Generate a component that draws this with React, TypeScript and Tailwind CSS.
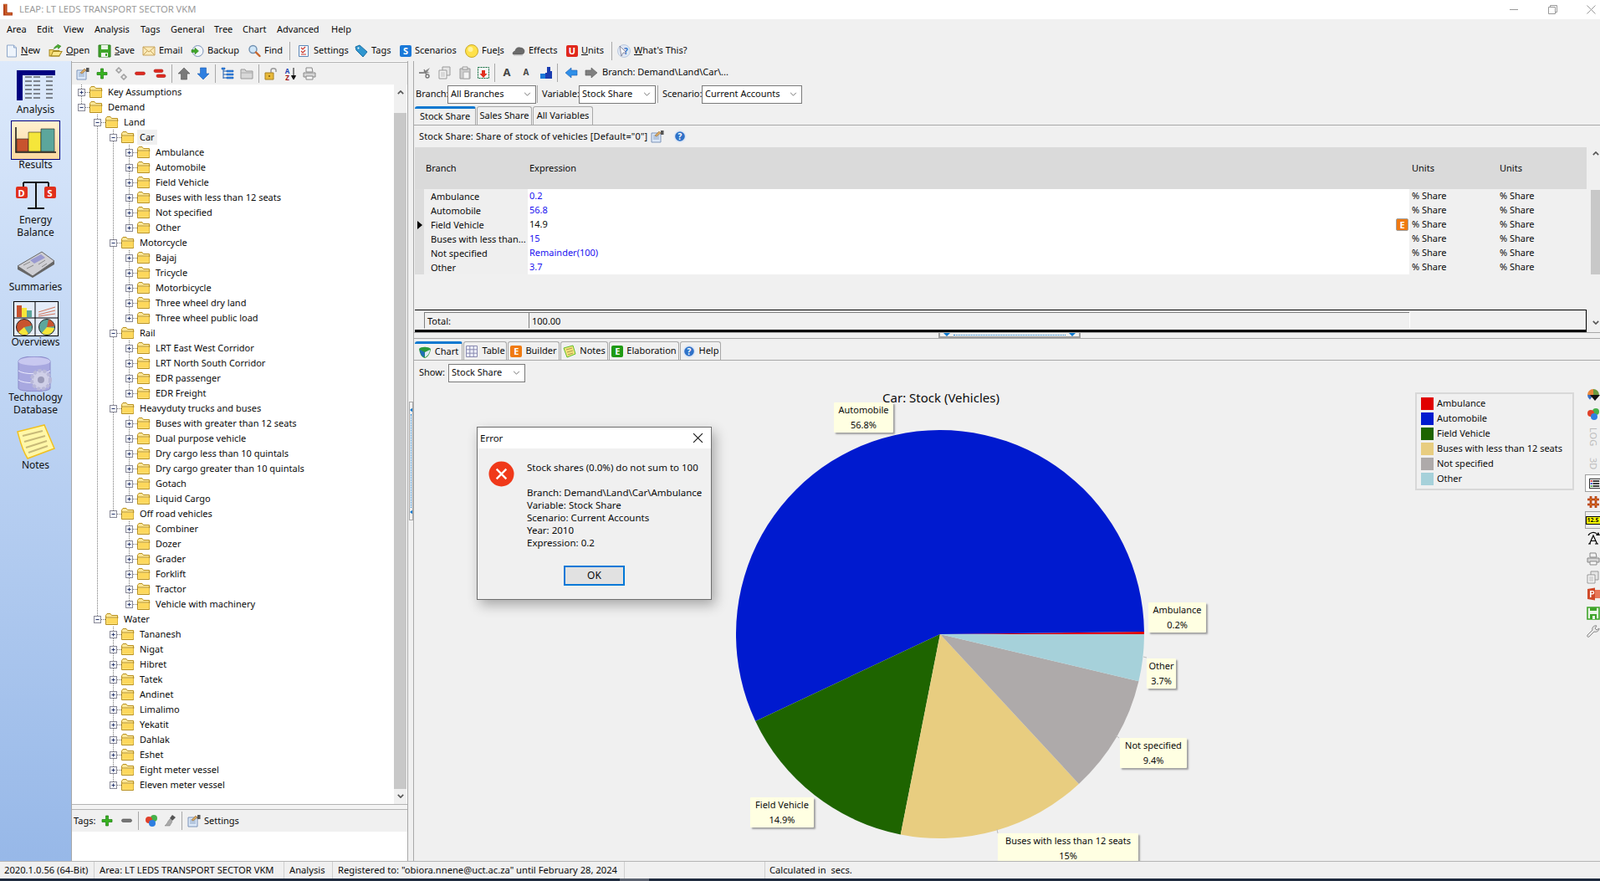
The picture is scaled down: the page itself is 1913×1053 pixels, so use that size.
import type { ReactNode } from "react";

type TreeNode = { name: string; children?: TreeNode[] };
type FlatRow = { name: string; guides: boolean[]; last: boolean; open: boolean };

const leaves = (...names: string[]): TreeNode[] => names.map((name) => ({ name }));

const tree: TreeNode[] = [
  { name: "Key Assumptions" },
  {
    name: "Demand",
    children: [
      {
        name: "Land",
        children: [
          { name: "Car", children: leaves("Ambulance", "Automobile", "Field Vehicle", "Buses with less than 12 seats", "Not specified", "Other") },
          { name: "Motorcycle", children: leaves("Bajaj", "Tricycle", "Motorbicycle", "Three wheel dry land", "Three wheel public load") },
          { name: "Rail", children: leaves("LRT East West Corridor", "LRT North South Corridor", "EDR passenger", "EDR Freight") },
          {
            name: "Heavyduty trucks and buses",
            children: leaves("Buses with greater than 12 seats", "Dual purpose vehicle", "Dry cargo less than 10 quintals", "Dry cargo greater than 10 quintals", "Gotach", "Liquid Cargo"),
          },
          { name: "Off road vehicles", children: leaves("Combiner", "Dozer", "Grader", "Forklift", "Tractor", "Vehicle with machinery") },
        ],
      },
      {
        name: "Water",
        children: leaves("Tananesh", "Nigat", "Hibret", "Tatek", "Andinet", "Limalimo", "Yekatit", "Dahlak", "Eshet", "Eight meter vessel", "Eleven meter vessel"),
      },
    ],
  },
];

function flatten(nodes: TreeNode[], guides: boolean[] = []): FlatRow[] {
  return nodes.flatMap((node, i) => {
    const last = i === nodes.length - 1;
    const row: FlatRow = { name: node.name, guides, last, open: !!node.children };
    return [row, ...(node.children ? flatten(node.children, [...guides, !last]) : [])];
  });
}

const rows = flatten(tree);

const gridRows = [
  { branch: "Ambulance", expr: "0.2", blue: true },
  { branch: "Automobile", expr: "56.8", blue: true },
  { branch: "Field Vehicle", expr: "14.9", blue: false },
  { branch: "Buses with less than...", expr: "15", blue: true },
  { branch: "Not specified", expr: "Remainder(100)", blue: true },
  { branch: "Other", expr: "3.7", blue: true },
];

const slices = [
  { name: "Ambulance", pct: 0.2, color: "#e00000" },
  { name: "Automobile", pct: 56.8, color: "#001acf" },
  { name: "Field Vehicle", pct: 14.9, color: "#1e6400" },
  { name: "Buses with less than 12 seats", pct: 15, color: "#e8cd80" },
  { name: "Not specified", pct: 9.4, color: "#aeaaaa" },
  { name: "Other", pct: 3.7, color: "#a6d1da" },
];

function Svg({ children, className = "w-4 h-4" }: { children: ReactNode; className?: string }) {
  return (
    <svg viewBox="0 0 16 16" className={`shrink-0 ${className}`}>
      {children}
    </svg>
  );
}

function Badge({ letter, className }: { letter: string; className: string }) {
  return (
    <span className={`shrink-0 flex items-center justify-center rounded-[2px] font-bold text-white text-[11px] leading-none ${className}`}>
      {letter}
    </span>
  );
}

const IconNew = () => (
  <svg viewBox="0 0 14 16" className="w-[14px] h-4 shrink-0">
    <path d="M1.500 1h8l3 3v11h-11z" fill="#eef4fc" stroke="#8ea6c8" />
    <path d="M9.500 1v3h3" fill="#cfdcf0" stroke="#8ea6c8" />
  </svg>
);
const IconOpen = () => (
  <Svg className="w-[17px] h-[17px]">
    <path d="M1 7h4l1 1h6v6H1z" fill="#f4d667" stroke="#a88a20" />
    <path d="M3 14l2-5h10l-3 5z" fill="#fbe88e" stroke="#a88a20" />
    <path d="M6 6c1-3 3-4 5-4l-1-1 4 2-3 3V4C9 4 8 5 6 6z" fill="#49b32e" stroke="#2b7a16" strokeWidth=".6" />
  </Svg>
);
const IconSave = () => (
  <Svg>
    <path d="M1 1h14v14H1z" fill="#3fa52a" stroke="#2a7d1a" />
    <path d="M4 1h8v5H4z" fill="#eaf5e6" />
    <path d="M4 10h8v5H4z" fill="#f4f4f4" />
    <path d="M9 11h2v3H9z" fill="#3fa52a" />
  </Svg>
);
const IconEmail = () => (
  <Svg>
    <path d="M1 3h14v10H1z" fill="#fbeab8" stroke="#c9a45a" />
    <path d="M1 3l7 6 7-6M1 13l5-5M15 13l-5-5" fill="none" stroke="#c9a45a" />
  </Svg>
);
const IconBackup = () => (
  <Svg>
    <circle cx="8.500" cy="8" r="6.500" fill="#f2f6fb" stroke="#7c93b8" />
    <path d="M1 6.500h4V4l4.500 4L5 12V9.500H1z" fill="#3fa52a" stroke="#2a7d1a" strokeWidth=".5" />
  </Svg>
);
const IconFind = () => (
  <Svg>
    <circle cx="6.500" cy="6" r="4.500" fill="#cfe6f8" stroke="#6f8fb0" strokeWidth="1.400" />
    <path d="M10 9.500l4.500 4.500" stroke="#c8642a" strokeWidth="2.400" strokeLinecap="round" />
  </Svg>
);
const IconSettings = () => (
  <Svg>
    <path d="M2.500 1.500h11v13h-11z" fill="#f2f7fd" stroke="#5e88b8" />
    <path d="M5 4l2 2 3-3M5 8l2 2 3-3" fill="none" stroke="#d23a2a" strokeWidth="1.200" />
    <path d="M5 12h6" stroke="#d23a2a" />
  </Svg>
);
const IconTag = () => (
  <Svg>
    <path d="M1 3l5-2 9 8-5 6-8-8z" fill="#2f96cf" stroke="#1d6fa3" />
    <circle cx="4.500" cy="4.500" r="1" fill="#fff" />
  </Svg>
);
const IconFuel = () => (
  <Svg>
    <circle cx="8" cy="8" r="7.500" fill="#ffe14a" stroke="#c9a92a" />
    <circle cx="6.500" cy="6" r="3" fill="#fff39e" />
  </Svg>
);
const IconCloud = () => (
  <Svg>
    <path d="M1 11c0-2 2-3 3-3 0-3 3-5 6-4 3 0 5 2 5 4 0 3-2 4-4 4H3c-1 0-2 0-2-1z" fill="#6b6b6b" stroke="#444" strokeWidth=".5" />
    <path d="M2 13h11" stroke="#bbb" />
  </Svg>
);
const IconHelp = () => (
  <Svg>
    <circle cx="8" cy="8" r="7.500" fill="#dfe7f4" />
    <circle cx="8" cy="8" r="5.800" fill="#2f72c8" />
    <text x="8" y="11.500" textAnchor="middle" fontSize="10" fontWeight="700" fill="#fff" fontFamily="Open Sans">?</text>
  </Svg>
);
const IconWhat = () => (
  <Svg>
    <circle cx="8" cy="8" r="7.500" fill="#dfe7f4" stroke="#9fb2d0" strokeWidth=".6" />
    <path d="M3 2l8 8H7l-2 4z" fill="#fff" stroke="#444a6a" strokeWidth=".6" />
    <text x="10.500" y="12" textAnchor="middle" fontSize="10" fontWeight="700" fill="#2f72c8" fontFamily="Open Sans">?</text>
  </Svg>
);
const IconPlus = ({ c = "#37b320", d = "#1d7a10" }: { c?: string; d?: string }) => (
  <Svg>
    <path d="M6.500 2h3v4.500H14v3H9.500v4.500h-3V9.500H2v-3h4.500z" fill={c} stroke={d} strokeWidth=".7" />
  </Svg>
);
const IconMove = () => (
  <Svg>
    <path d="M4 1h2v2h2v2H6v2H4V5H2V3h2zM10 9h2v2h2v2h-2v2h-2v-2H8v-2h2z" fill="#eee" stroke="#777" strokeWidth=".8" />
  </Svg>
);
const IconMinus = ({ c = "#e02a20", d = "#a8140e" }: { c?: string; d?: string }) => (
  <Svg>
    <rect x="1.500" y="6" width="12" height="3.500" rx="1.700" fill={c} stroke={d} strokeWidth=".6" />
  </Svg>
);
const IconMinus2 = () => (
  <Svg>
    <rect x="1" y="3" width="11" height="3.500" rx="1.700" fill="#e02a20" stroke="#a8140e" strokeWidth=".6" />
    <rect x="4" y="9" width="11" height="3.500" rx="1.700" fill="#e02a20" stroke="#a8140e" strokeWidth=".6" />
  </Svg>
);
const IconUp = () => (
  <Svg>
    <path d="M8 1l7 7h-3.500v7h-7V8H1z" fill="#7a7a7a" stroke="#555" strokeWidth=".6" />
  </Svg>
);
const IconDown = () => (
  <Svg>
    <path d="M4.500 1h7v7H15l-7 7-7-7h3.500z" fill="#2f7fe0" stroke="#1b5cb0" strokeWidth=".6" />
  </Svg>
);
const IconTreeView = () => (
  <Svg>
    <path d="M3 1v13M3 5h4M3 9h4M3 13h4" stroke="#1b5cb0" fill="none" />
    <path d="M1 1h4v2H1zM7 4h8v2H7zM7 8h8v2H7zM7 12h8v2H7z" fill="#2f7fe0" stroke="#1b5cb0" strokeWidth=".5" />
  </Svg>
);
const IconGrayFolder = () => (
  <Svg>
    <path d="M1 5V3h5l1 2h8v9H1z" fill="#d8d8d8" stroke="#999" />
    <path d="M1 7h14" stroke="#aaa" />
  </Svg>
);
const IconLock = () => (
  <Svg>
    <path d="M8 7V4c0-3 6-3 6 0v2" fill="none" stroke="#999" strokeWidth="1.500" />
    <path d="M1 7h10v8H1z" fill="#e8b93a" stroke="#a88020" />
    <circle cx="6" cy="11" r="1" fill="#7a5a10" />
  </Svg>
);
const IconAZ = () => (
  <Svg>
    <text x="4.500" y="7.500" textAnchor="middle" fontSize="8" fontWeight="700" fill="#1b3cb0" fontFamily="Open Sans">A</text>
    <text x="4.500" y="15.500" textAnchor="middle" fontSize="8" fontWeight="700" fill="#a01010" fontFamily="Open Sans">Z</text>
    <path d="M12 1v11M9.500 10.500L12 15l2.500-4.500z" stroke="#111" fill="#111" />
  </Svg>
);
const IconPrint = () => (
  <Svg>
    <path d="M4 1h7l1 5H4z" fill="#f2f2f2" stroke="#888" />
    <path d="M1 7h14v5H1z" fill="#d5d5d5" stroke="#888" />
    <path d="M4 11h8v4H4z" fill="#f8f8f8" stroke="#888" />
  </Svg>
);
const IconEdit = () => (
  <Svg>
    <path d="M1 4h11v11H1z" fill="#dbe8f8" stroke="#7c93b8" />
    <path d="M3 7h7M3 9h7M3 11h7" stroke="#8fa6c6" />
    <path d="M5 7l5-5 2 2-5 4z" fill="#d8a860" stroke="#8a6030" strokeWidth=".5" />
    <path d="M12 1h3.500v5H12z" fill="#555" />
  </Svg>
);
const IconScissors = () => (
  <Svg>
    <path d="M1 7h5l8-5-3 5 3 1-8 1H1z" fill="#8a8a8a" />
    <circle cx="11" cy="12" r="2" fill="none" stroke="#777" strokeWidth="1.400" />
    <path d="M7 4l3 7" stroke="#777" strokeWidth="1.200" />
  </Svg>
);
const IconCopy = () => (
  <Svg>
    <path d="M5 1h9v10H5z" fill="#e6e6e6" stroke="#999" />
    <path d="M1 5h9v10H1z" fill="#f4f4f4" stroke="#999" />
    <path d="M3 8h5M3 10h5M3 12h5" stroke="#bbb" />
  </Svg>
);
const IconPaste = () => (
  <Svg>
    <path d="M2 3h12v12H2z" fill="#cfcfcf" stroke="#999" />
    <path d="M5 1h6v3H5z" fill="#eee" stroke="#999" />
    <path d="M6 7h7v8H6z" fill="#f4f4f4" stroke="#aaa" />
  </Svg>
);
const IconImport = () => (
  <Svg>
    <rect x="1.500" y="1.500" width="13" height="13" fill="#f4f4f4" stroke="#0a6a3a" strokeDasharray="2 1" />
    <path d="M6 5h4v4h2.500L8 14 3.500 9H6z" fill="#e0301e" />
  </Svg>
);
const IconAb = () => (
  <Svg>
    <path d="M9 1h4v5h2v9H7V8h2z" fill="#1a3cb0" />
    <path d="M1 9h6v6H1z" fill="#1a78d8" />
  </Svg>
);
const IconBack = () => (
  <Svg>
    <path d="M8 2v3h7v6H8v3L1 8z" fill="#2f8fe8" stroke="#1b5cb0" strokeWidth=".6" />
  </Svg>
);
const IconForward = () => (
  <Svg>
    <path d="M8 2v3H1v6h7v3l7-6z" fill="#808080" stroke="#555" strokeWidth=".6" />
  </Svg>
);
const IconTable = () => (
  <Svg>
    <path d="M1.500 1.500h13v13h-13z" fill="#eef0fa" stroke="#8a8ab0" />
    <path d="M5.800 1.500v13M10.200 1.500v13M1.500 5.800h13M1.500 10.200h13" stroke="#8a8ab0" />
  </Svg>
);
const IconChartTab = () => (
  <Svg>
    <path d="M1 4c2-3 11-3 14 0-1 7-4 10-7 11-4-1-6-5-7-11z" fill="#2a9a3a" />
    <path d="M2 5l6 3-1 6C4 13 2 9 2 5z" fill="#1f6fb8" />
    <path d="M8 8l6-3c0 4-3 8-6 9z" fill="#dfe9f5" />
  </Svg>
);
const IconNotesTab = () => (
  <Svg>
    <path d="M1 4l11-3 3 10-10 4z" fill="#f4e27a" stroke="#5fc02a" />
    <path d="M4 6l7-2M5 9l7-2M6 12l6-2" stroke="#a89a50" />
  </Svg>
);
const IconShapes = () => (
  <Svg>
    <circle cx="11" cy="5" r="4" fill="#46b04a" />
    <circle cx="5" cy="7" r="4" fill="#e0402a" />
    <circle cx="9" cy="11" r="4" fill="#2f7fe0" />
  </Svg>
);
const IconBrush = () => (
  <Svg>
    <path d="M10 1l4 3-4 4-3-3z" fill="#555" />
    <path d="M7 6l3 3-3 5H1c3-2 3-5 6-8z" fill="#aaa" stroke="#777" strokeWidth=".5" />
  </Svg>
);
const IconPieDown = () => (
  <Svg>
    <path d="M8 8V1a7 7 0 0 1 7 7z" fill="#6a9a40" />
    <path d="M8 8V1a7 7 0 0 0-7 7z" fill="#e8863a" />
    <path d="M1 8a7 7 0 0 0 3 5.700L8 8z" fill="#3a6ec0" />
    <path d="M4 8h12l-6 7z" fill="#111" />
  </Svg>
);
const IconLegend = () => (
  <span className="w-[18px] h-[21px] mt-[4px] flex items-center border-l border-t border-b border-[#a0a0a0] pl-[4px] bg-white">
    <Svg className="w-[14px] h-[14px]">
      <path d="M.5 1.500h15v13H.5z" fill="#fff" stroke="#000" />
      <path d="M5 4.500h9M5 8h9M5 11.500h9" stroke="#000" strokeWidth="1.800" />
      <path d="M2 3.500h2v2H2z" fill="#e00000" />
      <path d="M2 7h2v2H2z" fill="#0018d0" />
      <path d="M2 10.500h2v2H2z" fill="#1aa01a" />
    </Svg>
  </span>
);
const IconGridRed = () => (
  <Svg>
    <path d="M5 1v14M11 1v14M1 5h14M1 11h14" stroke="#a01800" strokeWidth="2.600" />
    <path d="M5 1v14M11 1v14M1 5h14M1 11h14" stroke="#f0a030" strokeWidth=".8" />
  </Svg>
);
const IconFontCycle = () => (
  <Svg>
    <path d="M2 15h3M10 15h4M3.500 15L8 5l4.500 10M5 11.500h6" fill="none" stroke="#000" strokeWidth="1.200" />
    <path d="M2 5c2-4 8-5 11-1" fill="none" stroke="#000" strokeWidth="1.200" />
    <path d="M11 5h5l-2-4z" fill="#000" />
  </Svg>
);
const IconPpt = () => (
  <Svg>
    <path d="M1 2l9-1.500v15L1 14z" fill="#d04a2a" />
    <path d="M10 3h6v10h-6z" fill="#e8785a" />
    <path d="M4 4h3a2 2 0 0 1 0 4.500H5.500V12H4zM5.500 5.200v2.100H7a1 1 0 0 0 0-2.100z" fill="#fff" />
  </Svg>
);
const IconSaveOutline = () => (
  <Svg>
    <path d="M1 1h14v14H1z" fill="#eaf5e6" stroke="#3fa52a" strokeWidth="1.600" />
    <path d="M4 1h8v4H4z" fill="#3fa52a" />
    <path d="M4 9h8v6H4z" fill="#3fa52a" />
    <path d="M7 11h3v4H7z" fill="#eee" />
  </Svg>
);
const IconWrench = () => (
  <Svg>
    <path d="M15 4l-3 2-2-2 2-3c-3-1-6 2-5 5l-6 6c-1 2 1 3 2 2l6-6c3 1 6-1 6-4z" fill="#e8e8e8" stroke="#888" />
  </Svg>
);

const IconFolder = () => (
  <svg viewBox="0 0 16 14" className="w-4 h-[14px] shrink-0">
    <path d="M.5 13.500V2.500l1.500-2h4l1.500 2h7v11z" fill="#fbe79a" stroke="#b8901e" />
    <path d="M.5 5h15" stroke="#b8901e" />
    <path d="M1.500 6h13v6.500h-13z" fill="#fdd85c" />
  </svg>
);

function Connector({ row }: { row: FlatRow }) {
  return (
    <svg width="19" height="18" className="shrink-0">
      <path d={row.last ? "M9.500 0V9" : "M9.500 0V18"} stroke="#777" strokeDasharray="1 1" fill="none" />
      <path d="M14 9.500H19" stroke="#777" strokeDasharray="1 1" fill="none" />
      <rect x="5.500" y="5.500" width="8" height="8" fill="#f4f6fa" stroke="#8a8a98" />
      <path d="M7.500 9.500h4" stroke="#2c3a70" />
      {!row.open && <path d="M9.500 7.500v4" stroke="#2c3a70" />}
    </svg>
  );
}

function TreeRow({ row }: { row: FlatRow }) {
  return (
    <div className="flex items-center h-[18px]">
      {row.guides.map((on, i) => (
        <svg key={i} width="19" height="18" className="shrink-0">
          {on && <path d="M9.500 0V18" stroke="#777" strokeDasharray="1 1" fill="none" />}
        </svg>
      ))}
      <Connector row={row} />
      <IconFolder />
      <span className={`ml-[3px] px-[3px] leading-[18px] whitespace-nowrap ${row.name === "Car" ? "bg-[#f0f0f0]" : ""}`}>{row.name}</span>
    </div>
  );
}

function ToolItem({ icon, label, className }: { icon: ReactNode; label: ReactNode; className: string }) {
  return (
    <div className={`flex items-center gap-[4px] shrink-0 ${className}`}>
      {icon}
      <span>{label}</span>
    </div>
  );
}

const VSep = ({ className = "h-[22px]" }: { className?: string }) => <div className={`w-[1px] shrink-0 bg-[#a8a8a8] ${className}`} />;

function MainToolbar() {
  return (
    <div className="h-[25px] flex items-center pl-[7px] bg-[#f0f0f0] shrink-0">
      <ToolItem className="w-[51px]" icon={<IconNew />} label={<><u>N</u>ew</>} />
      <ToolItem className="w-[59px]" icon={<IconOpen />} label={<><u>O</u>pen</>} />
      <ToolItem className="w-[53px]" icon={<IconSave />} label={<><u>S</u>ave</>} />
      <ToolItem className="w-[58px]" icon={<IconEmail />} label="Email" />
      <ToolItem className="w-[68px]" icon={<IconBackup />} label="Backup" />
      <ToolItem className="w-[50px]" icon={<IconFind />} label="Find" />
      <VSep />
      <ToolItem className="w-[69px] ml-[8px]" icon={<IconSettings />} label="Settings" />
      <ToolItem className="w-[54px]" icon={<IconTag />} label="Tags" />
      <ToolItem className="w-[78px]" icon={<Badge letter="S" className="w-[14px] h-[14px] bg-[#1a78d8]" />} label="Scenarios" />
      <ToolItem className="w-[56px]" icon={<IconFuel />} label={<>Fue<u>l</u>s</>} />
      <ToolItem className="w-[65px]" icon={<IconCloud />} label="Effects" />
      <ToolItem className="w-[54px]" icon={<Badge letter="U" className="w-[14px] h-[14px] bg-[#e0281c]" />} label={<><u>U</u>nits</>} />
      <VSep />
      <ToolItem className="ml-[6px]" icon={<IconWhat />} label={<><u>W</u>hat's This?</>} />
    </div>
  );
}

function NavLabel({ lines, className }: { lines: string[]; className: string }) {
  return (
    <div className={`text-center leading-[15px] text-[12px] text-[#111] ${className}`}>
      {lines.map((l) => (
        <div key={l}>{l}</div>
      ))}
    </div>
  );
}

function Sidebar() {
  return (
    <div className="w-[85px] shrink-0 border-r border-[#a8a8a8] bg-gradient-to-b from-[#dce9fb] to-[#97b8e8] flex flex-col items-center box-content">
      <svg viewBox="0 0 46 36" className="w-[46px] h-[36px] mt-[11px]">
        <path d="M0 0h46v6H7v30H0z" fill="#000080" />
        <path d="M10 8h8M20 8h8M35 8h8M10 13h8M20 13h8M35 13h8M10 18h8M20 18h8M35 18h8M10 23h8M20 23h8M35 23h8M10 28h8M20 28h8M35 28h8M10 33h8M20 33h8M35 33h8" stroke="#222" />
      </svg>
      <NavLabel lines={["Analysis"]} className="mt-[3px]" />
      <div className="w-[59px] h-[47px] mt-[6px] border border-[#000080] bg-gradient-to-b from-[#fff0d0] to-[#fcd9a0] flex items-center justify-center">
        <svg viewBox="0 0 50 32" className="w-[50px] h-[32px]">
          <path d="M1 0v30h48" fill="none" stroke="#111" strokeWidth="1.500" />
          <path d="M2 14h14v15H2z" fill="#c8532e" stroke="#222" strokeWidth=".6" />
          <path d="M16 6h15v23H16z" fill="#f5e63a" stroke="#222" strokeWidth=".6" />
          <path d="M31 2h16v27H31z" fill="#5ca69c" stroke="#222" strokeWidth=".6" />
        </svg>
      </div>
      <NavLabel lines={["Results"]} className="-mt-[2px]" />
      <div className="relative w-[50px] h-[36px] mt-[13px] flex items-center justify-center">
        <svg viewBox="0 0 50 36" className="w-[50px] h-[36px]">
          <path d="M25 1v31M10 1h30M10 1v6M40 1v6M15 32h20" fill="none" stroke="#111" strokeWidth="2" />
        </svg>
        <Badge letter="D" className="absolute left-[1px] top-[6px] w-[14px] h-[14px] bg-[#e0301c]" />
        <Badge letter="S" className="absolute right-[1px] top-[6px] w-[14px] h-[14px] bg-[#e0301c]" />
      </div>
      <NavLabel lines={["Energy", "Balance"]} className="mt-[2px]" />
      <svg viewBox="0 0 46 32" className="w-[46px] h-[32px] mt-[15px]">
        <path d="M1 18L30 1l15 11-26 18z" fill="#cfcfd4" stroke="#666" />
        <path d="M1 18l18 12 26-18v4L19 32 1 22z" fill="#666" />
        <path d="M16 11l13-7 5 4-13 7z" fill="#9a9ad0" />
        <path d="M8 17l8-4M12 21l8-4M26 16l8-5M30 19l6-4" stroke="#888" />
      </svg>
      <NavLabel lines={["Summaries"]} className="mt-[3px]" />
      <svg viewBox="0 0 54 42" className="w-[54px] h-[42px] mt-[10px]">
        <rect x=".5" y=".5" width="53" height="41" fill="#e4ecf8" stroke="#000" />
        <path d="M26 .5v41M.5 20h53" stroke="#000" />
        <path d="M4 5h6v14H4z" fill="#c8532e" /><path d="M10 8h6v11h-6z" fill="#f5e63a" /><path d="M16 11h6v8h-6z" fill="#5ca69c" />
        <path d="M30 13l20-6M30 16l20-5M30 18l20-3" stroke="#c8532e" strokeWidth=".8" />
        <circle cx="13" cy="31" r="9.500" fill="#c8532e" stroke="#222" /><path d="M13 31l9-2a9.500 9.500 0 0 1-4 10z" fill="#5ca69c" /><path d="M13 31l5 8a9.500 9.500 0 0 1-12-2z" fill="#f5e63a" />
        <circle cx="40" cy="31" r="9.500" fill="#5ca69c" stroke="#222" /><path d="M40 31l2-9a9.500 9.500 0 0 1 7 8z" fill="#c8532e" /><path d="M40 31l9 1a9.500 9.500 0 0 1-15 6z" fill="#f5e63a" />
      </svg>
      <NavLabel lines={["Overviews"]} className="-mt-[1px]" />
      <svg viewBox="0 0 44 42" className="w-[44px] h-[42px] mt-[10px]">
        <path d="M1 6c0-8 38-8 38 0v32c0 5-38 5-38 0z" fill="#a8a8e0" stroke="#8a8ac8" />
        <ellipse cx="20" cy="6" rx="19" ry="5" fill="#c8c8f0" />
        <path d="M1 17c5 5 33 5 38 0M1 28c5 5 33 5 38 0" fill="none" stroke="#eef" />
        <circle cx="28" cy="28" r="11" fill="#d0d0e8" stroke="#b8b8d8" strokeWidth="4" strokeDasharray="4 2" />
        <circle cx="28" cy="28" r="4" fill="#9a9ab8" />
      </svg>
      <NavLabel lines={["Technology", "Database"]} className="-mt-[1px]" />
      <svg viewBox="0 0 46 42" className="w-[46px] h-[42px] mt-[10px]">
        <path d="M1 9L33 1l12 28-32 12C6 30 4 20 1 9z" fill="#fff7a8" stroke="#f0c020" strokeWidth="1.500" />
        <path d="M7 14l24-6M9 21l25-7M11 28l25-8M14 34l23-8" stroke="#c8ba78" strokeWidth="2" />
      </svg>
      <NavLabel lines={["Notes"]} className="-mt-[1px]" />
    </div>
  );
}

function TreePanel() {
  return (
    <div className="w-[402px] shrink-0 flex flex-col border-r border-[#a8a8a8] bg-white">
      <div className="h-[27px] shrink-0 bg-[#f0f0f0] border-t border-[#b4b4b4] mt-[1px] flex items-center pl-[5px] gap-[7px]">
        <IconEdit />
        <IconPlus />
        <IconMove />
        <IconMinus />
        <IconMinus2 />
        <VSep className="h-[22px] -mx-[1px]" />
        <IconUp />
        <IconDown />
        <VSep className="h-[22px] -mx-[1px]" />
        <IconTreeView />
        <IconGrayFolder />
        <VSep className="h-[22px] -mx-[1px]" />
        <IconLock />
        <IconAZ />
        <IconPrint />
      </div>
      <div className="flex-1 flex min-h-0">
        <div className="flex-1 pl-[2px] overflow-hidden">
          {rows.map((r) => (
            <TreeRow key={`${r.guides.length}-${r.name}`} row={r} />
          ))}
        </div>
        <div className="w-[15px] mr-[1px] flex flex-col items-center bg-[#f0f0f0] text-[#555]">
          <svg viewBox="0 0 10 6" className="w-[8px] h-[5px] mt-[7px]"><path d="M1 5l4-4 4 4" fill="none" stroke="#555" strokeWidth="2" /></svg>
          <div className="w-full h-[808px] mt-[22px] bg-[#c8c8c8]" />
          <svg viewBox="0 0 10 6" className="w-[8px] h-[5px] mt-[6px]"><path d="M1 1l4 4 4-4" fill="none" stroke="#555" strokeWidth="2" /></svg>
        </div>
      </div>
      <div className="h-[7px] shrink-0 border-t border-b border-[#b4b4b4] bg-[#f4f4f4]" />
      <div className="h-[26px] shrink-0 bg-[#f0f0f0] flex items-center pl-[2px] text-[11px]">
        <span className="w-[32px]">Tags:</span>
        <IconPlus />
        <span className="w-[8px]" />
        <IconMinus c="#777" d="#444" />
        <span className="w-[5px]" />
        <VSep />
        <span className="w-[7px]" />
        <IconShapes />
        <span className="w-[7px]" />
        <IconBrush />
        <span className="w-[5px]" />
        <VSep />
        <span className="w-[6px]" />
        <IconEdit />
        <span className="ml-[4px]">Settings</span>
      </div>
      <div className="h-[35px] shrink-0 bg-white" />
    </div>
  );
}

function Select({ value, className }: { value: string; className: string }) {
  return (
    <div className={`h-[22px] bg-white border border-[#7a7a7a] flex items-center justify-between pl-[3px] pr-[5px] shrink-0 ${className}`}>
      <span className="pb-[1px]">{value}</span>
      <svg viewBox="0 0 10 6" className="w-[9px] h-[5px]"><path d="M1 1l4 4 4-4" fill="none" stroke="#555" /></svg>
    </div>
  );
}

function Tab({ label, icon, active, className }: { label: string; icon?: ReactNode; active?: boolean; className: string }) {
  return (
    <div
      className={`flex items-center justify-center gap-[4px] rounded-t-[3px] border-l border-r border-[#a8a8a8] shrink-0 bg-[#f0f0f0] ${
        active ? "h-full border-t-[3px] border-t-[#0a78d0] border-r-[#a8a8a8] border-l-0 -mb-[1px] z-10" : "h-[22px] mt-auto border-t"
      } ${className}`}
    >
      {icon}
      <span>{label}</span>
    </div>
  );
}

function GridPane() {
  return (
    <div className="h-[324px] shrink-0 flex flex-col">
      <div className="h-[27px] shrink-0 flex items-center pl-[5px] gap-[8px]">
        <IconScissors />
        <IconCopy />
        <IconPaste />
        <span className="-ml-[2px] flex"><IconImport /></span>
        <VSep className="h-[22px] -ml-[3px]" />
        <span className="w-[12px] text-center font-['Liberation_Serif',serif] font-bold text-[13px] text-[#444]">A</span>
        <span className="w-[12px] ml-[3px] text-center font-['Liberation_Serif',serif] font-bold text-[10px] text-[#444]">A</span>
        <span className="ml-[2px] flex"><IconAb /></span>
        <VSep className="h-[22px] -ml-[3px]" />
        <IconBack />
        <IconForward />
        <span className="-ml-[3px]">Branch: Demand\Land\Car\...</span>
      </div>
      <div className="h-[25px] shrink-0 flex items-center pl-[2px]">
        <span className="w-[38px]">Branch:</span>
        <Select value="All Branches" className="w-[106px]" />
        <VSep className="h-[21px] ml-[1px]" />
        <span className="w-[44px] ml-[5px]">Variable:</span>
        <Select value="Stock Share" className="w-[92px]" />
        <VSep className="h-[21px] ml-[2px]" />
        <span className="w-[47px] ml-[5px]">Scenario:</span>
        <Select value="Current Accounts" className="w-[120px]" />
      </div>
      <div className="h-[25px] shrink-0 flex pt-[2px] gap-[1px] border-b border-[#a8a8a8]">
        <Tab active label="Stock Share" className="w-[73px] ml-[1px]" />
        <Tab label="Sales Share" className="w-[66px]" />
        <Tab label="All Variables" className="w-[72px]" />
      </div>
      <div className="h-[26px] shrink-0 flex items-center pl-[6px] gap-[4px]">
        <span className="tracking-[0.15px]">Stock Share: Share of stock of vehicles [Default="0"]</span>
        <IconEdit />
        <span className="w-[3px]" />
        <IconHelp />
      </div>
      <div className="flex-1 flex min-h-0">
        <div className="w-[1402px] ml-[1px] shrink-0 flex flex-col border-r border-transparent">
          <div className="h-[50px] shrink-0 bg-[#dadada] flex items-center">
            <span className="w-[137px] pl-[13px]">Branch</span>
            <span className="w-[1055px]">Expression</span>
            <span className="w-[105px]">Units</span>
            <span>Units</span>
          </div>
          {gridRows.map((r) => (
            <div key={r.branch} className="h-[17px] shrink-0 flex items-center">
              <div className="w-[11px] h-full bg-[#dcdcdc] flex items-center justify-center">
                {r.branch === "Field Vehicle" && <svg viewBox="0 0 6 10" className="w-[6px] h-[10px]"><path d="M0 0l6 5-6 5z" fill="#000" /></svg>}
              </div>
              <div className="w-[124px] h-full bg-[#efefef] pl-[8px] whitespace-nowrap overflow-hidden leading-[17px]">{r.branch}</div>
              <div className="w-[1054px] h-full bg-white pl-[2px] flex items-center justify-between pr-[1px]">
                <span className={r.blue ? "text-[#1a10f0]" : ""}>{r.expr}</span>
                {r.branch === "Field Vehicle" && <Badge letter="E" className="w-[15px] h-[15px] bg-[#f07a10] border border-[#a0a0a0]" />}
              </div>
              <div className="w-[108px] pl-[3px]">% Share</div>
              <div>% Share</div>
            </div>
          ))}
          <div className="h-[42px] shrink-0" />
          <div className="h-[27px] shrink-0 border-t border-r border-black border-b-[3px] pt-[2px] flex">
            <div className="w-[11px]" />
            <div className="w-[125px] h-[20px] border-l border-t border-[#808080] pl-[3px] leading-[19px] border-b border-b-white">Total:</div>
            <div className="w-[1053px] h-[20px] border-l border-t border-[#808080] pl-[3px] leading-[19px] border-b border-b-white">100.00</div>
            <div className="flex-1 h-[20px] border-b border-white border-l" />
          </div>
        </div>
        <div className="w-[11px] ml-[4px] bg-[#f0f0f0] flex flex-col items-center">
          <svg viewBox="0 0 10 6" className="w-[8px] h-[5px] mt-[5px]"><path d="M1 5l4-4 4 4" fill="none" stroke="#555" strokeWidth="2" /></svg>
          <div className="w-full h-[101px] mt-[41px] bg-[#c8c8c8]" />
          <svg viewBox="0 0 10 6" className="w-[8px] h-[5px] mt-[55px]"><path d="M1 1l4 4 4-4" fill="none" stroke="#555" strokeWidth="2" /></svg>
        </div>
      </div>
    </div>
  );
}

function polar(r: number, deg: number, cx: number, cy: number) {
  const a = (deg * Math.PI) / 180;
  return [cx + r * Math.cos(a), cy - r * Math.sin(a)];
}

function Pie() {
  let start = 0;
  return (
    <svg width="490" height="490" className="absolute left-[384px] top-[56px] overflow-visible">
      {slices.map((s) => {
        const end = start + (s.pct / 100) * 360;
        const [x1, y1] = polar(244, start, 245, 245);
        const [x2, y2] = polar(244, end, 245, 245);
        const large = end - start > 180 ? 1 : 0;
        start = end;
        return <path key={s.name} d={`M245 245L${x1} ${y1}A244 244 0 ${large} 0 ${x2} ${y2}Z`} fill={s.color} />;
      })}
      <path d="M488 272l4 1M455 366l4 3M313 478l1 5" stroke="#bdbdbd" fill="none" />
    </svg>
  );
}

const pieLabels = [
  { name: "Automobile", pct: "56.8%", cls: "left-[502px] top-[24px] w-[71px] h-[36px]" },
  { name: "Ambulance", pct: "0.2%", cls: "left-[878px] top-[263px] w-[69px] h-[36px]" },
  { name: "Other", pct: "3.7%", cls: "left-[876px] top-[330px] w-[35px] h-[36px]" },
  { name: "Not specified", pct: "9.4%", cls: "left-[844px] top-[425px] w-[80px] h-[36px]" },
  { name: "Field Vehicle", pct: "14.9%", cls: "left-[402px] top-[496px] w-[76px] h-[36px]" },
  { name: "Buses with less than 12 seats", pct: "15%", cls: "left-[698px] top-[539px] w-[168px] h-[36px]" },
];

function ChartPane() {
  return (
    <div className="flex-1 min-h-0 flex flex-col">
      <div className="h-[26px] shrink-0 flex border-b border-[#a8a8a8] gap-[1px] pt-[3px]">
        <Tab active icon={<IconChartTab />} label="Chart" className="w-[57px] ml-[1px]" />
        <Tab icon={<IconTable />} label="Table" className="w-[52px]" />
        <Tab icon={<Badge letter="E" className="w-[14px] h-[14px] bg-[#f07a10]" />} label="Builder" className="w-[62px]" />
        <Tab icon={<IconNotesTab />} label="Notes" className="w-[57px]" />
        <Tab icon={<Badge letter="E" className="w-[14px] h-[14px] bg-[#1f9a14]" />} label="Elaboration" className="w-[84px]" />
        <Tab icon={<IconHelp />} label="Help" className="w-[49px]" />
      </div>
      <div className="h-[26px] shrink-0 flex items-center pl-[6px] pt-[3px]">
        <span className="w-[35px]">Show:</span>
        <Select value="Stock Share" className="w-[92px]" />
      </div>
      <div className="flex-1 flex min-h-0">
        <div className="relative flex-1 overflow-hidden">
          <Pie />
          {pieLabels.map((l) => (
            <div key={l.name} className={`absolute bg-[#ffffe2] shadow-[2px_2px_2px_#a0a0a0] rounded-[1px] text-center leading-[18px] whitespace-nowrap ${l.cls}`}>
              <div>{l.name}</div>
              <div>{l.pct}</div>
            </div>
          ))}
          <div className="absolute left-[555px] top-[8px] w-[150px] text-center text-[15px] leading-[20px] whitespace-nowrap">Car: Stock (Vehicles)</div>
          <div className="absolute left-[1197px] top-[12px] w-[190px] h-[117px] border-2 border-[#d8d8d8] pl-[5px] pt-[2px]">
            {slices.map((s) => (
              <div key={s.name} className="h-[18px] flex items-center gap-[4px] whitespace-nowrap">
                <span className="w-[15px] h-[15px] shrink-0" style={{ backgroundColor: s.color }} />
                <span>{s.name}</span>
              </div>
            ))}
          </div>
        </div>
        <div className="w-[18px] shrink-0 flex flex-col items-end pt-[7px]">
          <IconPieDown />
          <div className="h-[7px]" />
          <IconShapes />
          <span className="h-[24px] w-4 mt-[8px] text-[11px] text-[#bbb] [writing-mode:vertical-lr] leading-4 whitespace-nowrap">LOG</span>
          <span className="h-[16px] w-4 mt-[12px] text-[11px] text-[#bbb] [writing-mode:vertical-lr] leading-4 whitespace-nowrap">3D</span>
          <IconLegend />
          <div className="h-[4px]" />
          <IconGridRed />
          <div className="h-[3px]" />
          <span className="w-[18px] h-[21px] border-l border-t border-b border-[#a0a0a0] flex items-center justify-center bg-[#eee]">
            <span className="bg-[#ffff00] border border-black text-[7px] font-bold leading-[8px] px-[1px]">12.5</span>
          </span>
          <div className="h-[3px]" />
          <IconFontCycle />
          <div className="h-[9px]" />
          <IconPrint />
          <div className="h-[6px]" />
          <IconCopy />
          <div className="h-[4px]" />
          <IconPpt />
          <div className="h-[7px]" />
          <IconSaveOutline />
          <div className="h-[6px]" />
          <IconWrench />
        </div>
      </div>
    </div>
  );
}

function ErrorDialog() {
  return (
    <div className="absolute left-[570px] top-[510px] w-[281px] h-[207px] bg-[#f0f0f0] border border-[#6e6e6e] shadow-[4px_6px_14px_rgba(0,0,0,0.3)] flex flex-col text-[11.5px]">
      <div className="h-[25px] bg-white flex items-center justify-between pl-[3px] pr-[9px]">
        <span>Error</span>
        <svg viewBox="0 0 12 12" className="w-[13px] h-[13px]"><path d="M1 1l10 10M11 1L1 11" stroke="#111" /></svg>
      </div>
      <div className="flex-1 flex pl-[13px] pt-[15px]">
        <svg viewBox="0 0 32 32" className="w-[31px] h-[31px] shrink-0">
          <circle cx="16" cy="16" r="15.500" fill="#f0391a" />
          <path d="M10 10l12 12M22 10L10 22" stroke="#fff" strokeWidth="2.400" />
        </svg>
        <div className="ml-[15px] leading-[15px] whitespace-nowrap">
          <div>Stock shares (0.0%) do not sum to 100</div>
          <div className="mt-[15px]">Branch: Demand\Land\Car\Ambulance</div>
          <div>Variable: Stock Share</div>
          <div>Scenario: Current Accounts</div>
          <div>Year: 2010</div>
          <div>Expression: 0.2</div>
        </div>
      </div>
      <div className="h-[40px] flex justify-center">
        <div className="w-[73px] h-[24px] border-2 border-[#0078d7] bg-[#e1e1e1] flex items-center justify-center text-[12px]">OK</div>
      </div>
    </div>
  );
}

function StatusCell({ children, className }: { children?: ReactNode; className: string }) {
  return <div className={`h-full flex items-center shrink-0 border-r border-[#d0d0d0] whitespace-pre ${className}`}>{children}</div>;
}

export default function App() {
  return (
    <div className="relative w-[1913px] h-[1053px] overflow-hidden flex flex-col bg-[#f0f0f0] font-['Open_Sans',sans-serif] text-[11px] text-[#0a0a0a]">
      <div className="h-[23px] shrink-0 bg-white flex items-center pl-[4px]">
        <svg viewBox="0 0 12 15" className="w-[11px] h-[15px]">
          <path d="M0 0h5v11h7v4H0z" fill="#b5401a" />
          <path d="M1 1h2v12h8" stroke="#d8762e" fill="none" />
        </svg>
        <span className="ml-[8px] text-[#9a9a9a] text-[11.250px]">LEAP: LT LEDS TRANSPORT SECTOR VKM</span>
        <div className="ml-auto flex items-center">
          <svg viewBox="0 0 11 11" className="w-[11px] h-[11px] mr-[35px]"><path d="M0 5.500h10" stroke="#999" /></svg>
          <svg viewBox="0 0 11 11" className="w-[11px] h-[11px] mr-[35px]"><path d="M.5 2.500h8v8h-8zM2.500 2.500v-2h8v8h-2" stroke="#999" fill="none" /></svg>
          <svg viewBox="0 0 11 11" className="w-[11px] h-[11px] mr-[5px]"><path d="M.5.500l10 10M10.500.500l-10 10" stroke="#999" /></svg>
        </div>
      </div>
      <div className="h-[25px] shrink-0 flex items-center pl-[8px]">
        <span className="w-[36px]">Area</span>
        <span className="w-[32px]">Edit</span>
        <span className="w-[37px]">View</span>
        <span className="w-[55px]">Analysis</span>
        <span className="w-[36px]">Tags</span>
        <span className="w-[52px]">General</span>
        <span className="w-[34px]">Tree</span>
        <span className="w-[41px]">Chart</span>
        <span className="w-[65px]">Advanced</span>
        <span>Help</span>
      </div>
      <MainToolbar />
      <div className="flex-1 min-h-0 flex">
        <Sidebar />
        <TreePanel />
        <div className="w-[7px] shrink-0 flex items-center justify-center border-r border-[#a8a8a8]">
          <div className="h-[142px] w-[5px] border border-[#a8a8a8] flex flex-col items-center justify-between py-[6px]">
            <svg viewBox="0 0 4 6" className="w-[3px] h-[6px]"><path d="M4 0L0 3l4 3z" fill="#0a78d0" /></svg>
            <div className="flex-1 border-l border-dotted border-[#0a78d0] my-[2px]" />
            <svg viewBox="0 0 4 6" className="w-[3px] h-[6px]"><path d="M4 0L0 3l4 3z" fill="#0a78d0" /></svg>
          </div>
        </div>
        <div className="flex-1 min-w-0 flex flex-col">
          <GridPane />
          <div className="h-[8px] shrink-0 border-t border-b border-[#a8a8a8] flex justify-center">
            <div className="w-[170px] h-full ml-[6px] border-x-2 border-b-2 border-[#a0a0a0] flex items-center px-[4px] gap-[4px]">
              <svg viewBox="0 0 8 4" className="w-[8px] h-[4px] shrink-0"><path d="M0 0h8L4 4z" fill="#0a78d0" /></svg>
              <div className="flex-1 border-t border-dotted border-[#0a78d0]" />
              <svg viewBox="0 0 8 4" className="w-[8px] h-[4px] shrink-0"><path d="M0 0h8L4 4z" fill="#0a78d0" /></svg>
            </div>
          </div>
          <ChartPane />
        </div>
      </div>
      <div className="h-[21px] shrink-0 flex items-center border-t border-[#b4b4b4] text-[11.200px]">
        <StatusCell className="w-[113px] pl-[5px]">2020.1.0.56 (64-Bit)</StatusCell>
        <StatusCell className="w-[227px] pl-[6px]">Area: LT LEDS TRANSPORT SECTOR VKM</StatusCell>
        <StatusCell className="w-[58px] pl-[6px]">Analysis</StatusCell>
        <StatusCell className="w-[349px] pl-[6px]">Registered to: "obiora.nnene@uct.ac.za" until February 28, 2024</StatusCell>
        <StatusCell className="w-[168px]" />
        <div className="pl-[5px] whitespace-pre">Calculated in  secs.</div>
      </div>
      <div className="h-[3px] shrink-0 bg-[#1e2a3e] flex">
        <div className="w-[35px] ml-[741px] bg-[#5a6270]" />
      </div>
      <ErrorDialog />
    </div>
  );
}
